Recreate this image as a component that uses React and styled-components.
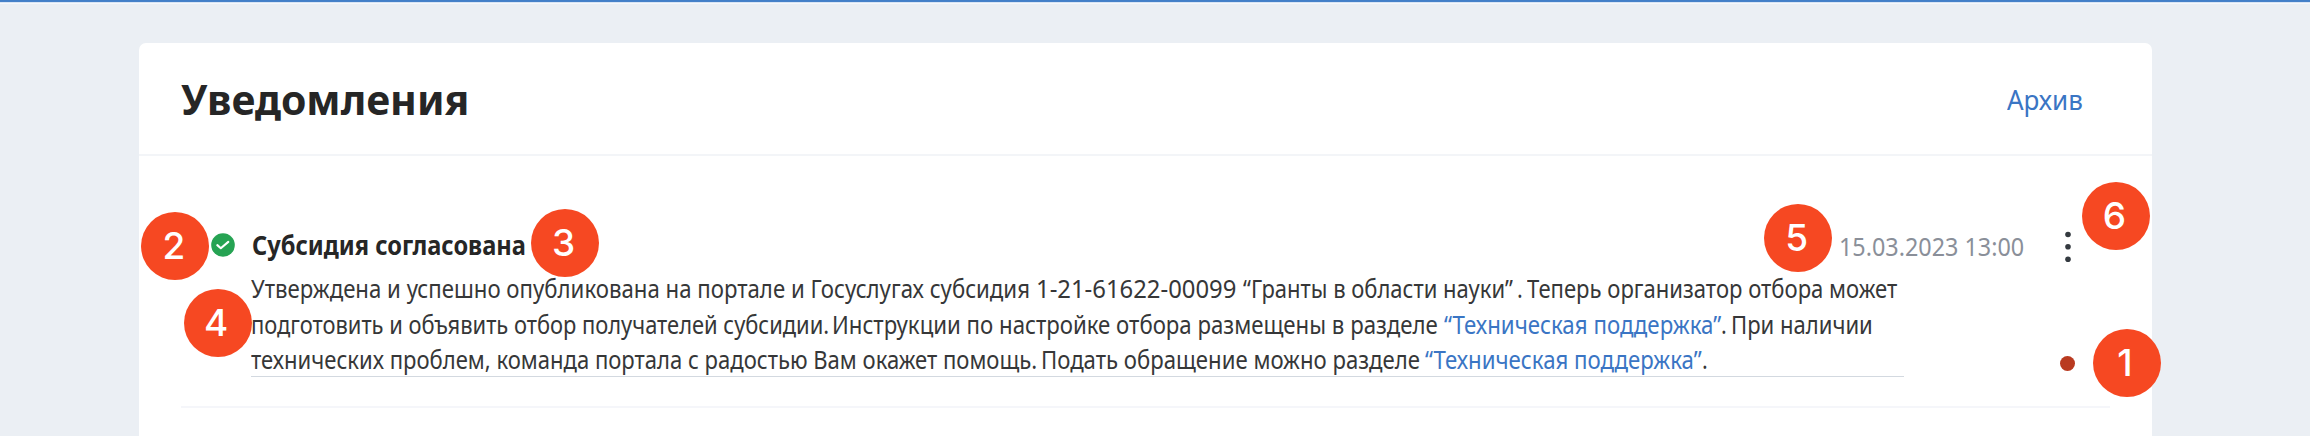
import React, { useLayoutEffect, useRef, useState } from 'react';
import styled, { createGlobalStyle } from 'styled-components';

const GlobalStyle = createGlobalStyle`
  *, *::before, *::after { box-sizing: border-box; }
  html, body { margin: 0; padding: 0; }
  body {
    background: #ebeff4;
    font-family: "Noto Sans", "Open Sans", sans-serif;
    color: #363738;
    overflow: hidden;
  }
`;

const Page = styled.div`
  position: relative;
  height: 436px;
  overflow: hidden;
  background: #ebeff4;
`;

const TopBar = styled.div`
  height: 4px;
  background: linear-gradient(#427fc8 0 1px, #4681c9 1px 2px, #d9e5f4 2px 3px, #f5f8fc 3px 4px);
`;

const Card = styled.main`
  width: 2013px;
  height: 420px;
  margin: 39px 0 0 139px;
  background: #fff;
  border-radius: 7px 7px 0 0;
`;

const CardHeader = styled.header`
  display: flex;
  justify-content: space-between;
  align-items: flex-start;
  height: 113px;
  padding: 27px 69px 0 42px;
  border-bottom: 2px solid #f3f5f8;
`;

const Heading = styled.h1`
  margin: 0;
  font-size: 41.5px;
  line-height: 58px;
  font-weight: 700;
  color: #262626;
`;

const ArchiveLink = styled.a`
  margin-top: 12px;
  font-size: 27px;
  line-height: 36px;
  color: #3a75c4;
`;

const Notification = styled.article`
  margin: 0 42px;
  height: 252px;
  padding: 72px 0 0 30px;
  border-bottom: 2px solid #f5f6fa;
`;

const NotificationHead = styled.div`
  display: flex;
  align-items: flex-start;
  height: 42px;
`;

const StatusIcon = styled.svg`
  flex: none;
  width: 24px;
  height: 24px;
  margin: 5px 17px 0 0;
`;

const Title = styled.h2`
  flex: 1;
  margin: 0;
  font-size: 27.5px;
  line-height: 34px;
  font-weight: 700;
  color: #262626;
`;

const DateText = styled.time`
  font-size: 25px;
  line-height: 36px;
  color: #8a8f99;
`;

const Kebab = styled.svg`
  flex: none;
  width: 12px;
  height: 34px;
  margin: 2px 36px 0 38px;
`;

const NotificationBody = styled.div`
  display: flex;
  justify-content: space-between;
  align-items: flex-start;
  padding: 0 35px 0 40px;
`;

const Message = styled.div`
  width: 1653px;
  height: 107px;
  padding-top: 1px;
  border-bottom: 1px solid #d3d9e0;
  font-size: 25px;
  line-height: 35.6px;
`;

const Line = styled.div`
  display: flex;
  height: 35.6px;
  white-space: pre;
`;

const FitBox = styled.span`
  display: block;
  flex: none;
  width: ${(p) => p.$width}px;
  margin-right: ${(p) => p.$gap || 0}px;
  color: ${(p) => (p.$link ? '#3a75c4' : 'inherit')};
  white-space: pre;
`;

const FitInner = styled.span`
  display: inline-block;
  transform-origin: 0 50%;
`;

const UnreadDot = styled.span`
  flex: none;
  width: 15px;
  height: 15px;
  margin-top: 86px;
  border-radius: 50%;
  background: #b93a20;
`;

const Badge = styled.span`
  position: absolute;
  left: ${(p) => p.$x - 34}px;
  top: ${(p) => p.$y - 34}px;
  display: flex;
  justify-content: center;
  width: 68px;
  height: 68px;
  padding-right: 3px;
  border-radius: 50%;
  background: #f64822;
  color: #fff;
  font-family: Inter, sans-serif;
  font-size: 37px;
  font-weight: 500;
  line-height: 67px;
`;

/* Condenses a run of text horizontally so that it takes exactly `width` pixels. */
function Fit({ width, gap, link, children }) {
  const ref = useRef(null);
  const [scale, setScale] = useState(1);
  useLayoutEffect(() => {
    setScale(width / ref.current.offsetWidth);
  }, [width, children]);
  return (
    <FitBox $width={width} $gap={gap} $link={link}>
      <FitInner ref={ref} style={{ transform: `scaleX(${scale})` }}>{children}</FitInner>
    </FitBox>
  );
}

const badges = [
  { n: 2, x: 175.4, y: 245.7 },
  { n: 3, x: 565.2, y: 242.7 },
  { n: 4, x: 217.6, y: 322.8 },
  { n: 5, x: 1798.3, y: 237.7 },
  { n: 6, x: 2116, y: 216.4 },
  { n: 1, x: 2126.5, y: 363.3 },
];

export default function App() {
  return (
    <Page>
      <GlobalStyle />
      <TopBar />
      <Card>
        <CardHeader>
          <Heading><Fit width={288}>Уведомления</Fit></Heading>
          <ArchiveLink><Fit width={76}>Архив</Fit></ArchiveLink>
        </CardHeader>
        <Notification>
          <NotificationHead>
            <StatusIcon viewBox="0 0 24 24">
              <circle cx="12" cy="12" r="11.8" fill="#26a353" />
              <path d="M6.3 12.1 9.8 15.2 17.3 8.9" fill="none" stroke="#fff" strokeWidth="2.1" strokeLinecap="round" strokeLinejoin="round" />
            </StatusIcon>
            <Title><Fit width={274}>Субсидия согласована</Fit></Title>
            <DateText><Fit width={185}>15.03.2023 13:00</Fit></DateText>
            <Kebab viewBox="0 0 12 34">
              <circle cx="6" cy="4.5" r="2.8" fill="#343a40" />
              <circle cx="6" cy="16.8" r="2.8" fill="#343a40" />
              <circle cx="6" cy="29.2" r="2.8" fill="#343a40" />
            </Kebab>
          </NotificationHead>
          <NotificationBody>
            <Message>
              <Line>
                <Fit width={785}>{'Утверждена и успешно опубликована на портале и Госуслугах субсидия '}</Fit>
                <Fit width={207}>{'1-21-61622-00099 '}</Fit>
                <Fit width={270} gap={4}>“Гранты в области науки”</Fit>
                <Fit width={6} gap={3.5}>.</Fit>
                <Fit width={370}>Теперь организатор отбора может</Fit>
              </Line>
              <Line>
                <Fit width={578} gap={3}>подготовить и объявить отбор получателей субсидии.</Fit>
                <Fit width={612}>{'Инструкции по настройке отбора размещены в разделе '}</Fit>
                <Fit width={277} link>“Техническая поддержка”</Fit>
                <Fit width={6} gap={3.5}>.</Fit>
                <Fit width={142}>При наличии</Fit>
              </Line>
              <Line>
                <Fit width={786} gap={3.5}>технических проблем, команда портала с радостью Вам окажет помощь.</Fit>
                <Fit width={384.5}>{'Подать обращение можно разделе '}</Fit>
                <Fit width={276.5} link>“Техническая поддержка”</Fit>
                <Fit width={6}>.</Fit>
              </Line>
            </Message>
            <UnreadDot />
          </NotificationBody>
        </Notification>
      </Card>
      {badges.map((b) => (
        <Badge key={b.n} $x={b.x} $y={b.y}>{b.n}</Badge>
      ))}
    </Page>
  );
}
